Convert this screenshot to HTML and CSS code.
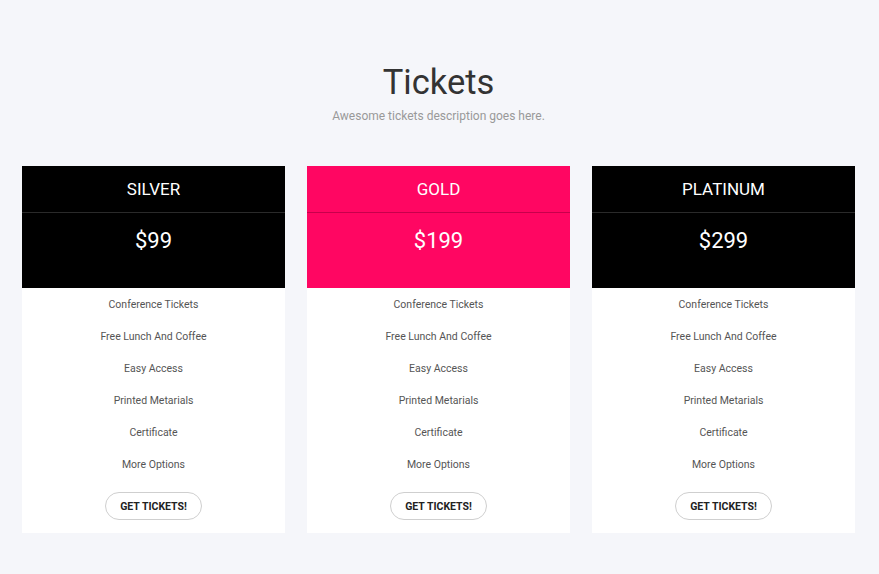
FILE: index.html
```html
<!DOCTYPE html>
<html lang="en">
<head>
<meta charset="utf-8">
<title>Tickets</title>
<link rel="stylesheet" href="styles.css">
</head>
<body>
<section class="tickets">
  <h1 class="title">Tickets</h1>
  <p class="subtitle">Awesome tickets description goes here.</p>
  <div class="cards">
    <div class="card">
      <div class="card-head">SILVER</div>
      <div class="card-price">$99</div>
      <ul class="features">
        <li>Conference Tickets</li>
        <li>Free Lunch And Coffee</li>
        <li>Easy Access</li>
        <li>Printed Metarials</li>
        <li>Certificate</li>
        <li>More Options</li>
      </ul>
      <div class="card-foot"><a class="btn" href="#">GET TICKETS!</a></div>
    </div>
    <div class="card card-gold">
      <div class="card-head">GOLD</div>
      <div class="card-price">$199</div>
      <ul class="features">
        <li>Conference Tickets</li>
        <li>Free Lunch And Coffee</li>
        <li>Easy Access</li>
        <li>Printed Metarials</li>
        <li>Certificate</li>
        <li>More Options</li>
      </ul>
      <div class="card-foot"><a class="btn" href="#">GET TICKETS!</a></div>
    </div>
    <div class="card">
      <div class="card-head">PLATINUM</div>
      <div class="card-price">$299</div>
      <ul class="features">
        <li>Conference Tickets</li>
        <li>Free Lunch And Coffee</li>
        <li>Easy Access</li>
        <li>Printed Metarials</li>
        <li>Certificate</li>
        <li>More Options</li>
      </ul>
      <div class="card-foot"><a class="btn" href="#">GET TICKETS!</a></div>
    </div>
  </div>
</section>
</body>
</html>
```
FILE: styles.css
```css
html, body {
  margin: 0;
  padding: 0;
  background: #f5f6fa;
  font-family: Roboto, "Liberation Sans", Arial, sans-serif;
}
.tickets {
  padding: 62px 24px 40px 22px;
}
.title {
  margin: 0;
  text-align: center;
  font-size: 34.5px;
  line-height: 40px;
  font-weight: 400;
  color: #333;
}
.subtitle {
  margin: 4px 0 0;
  text-align: center;
  font-size: 12px;
  line-height: 20px;
  color: #999;
}
.cards {
  margin-top: 40px;
  display: grid;
  grid-template-columns: repeat(3, 263px);
  column-gap: 22px;
}
.card {
  background: #fff;
  text-align: center;
}
.card-head {
  background: #000;
  color: #fff;
  font-size: 17px;
  line-height: 45px;
  padding-top: 1px;
  border-bottom: 1px solid #2a2a2a;
}
.card-price {
  background: #000;
  color: #fff;
  font-size: 22px;
  line-height: 26px;
  padding: 15px 0 34px;
}
.card-gold .card-head {
  background: #ff0662;
  border-bottom-color: #c8004c;
}
.card-gold .card-price {
  background: #ff0662;
}
.features {
  list-style: none;
  margin: 0;
  padding: 1px 0 0;
}
.features li {
  font-size: 10.5px;
  line-height: 32px;
  color: #555;
}
.card-foot {
  padding: 11px 0 13px;
}
.btn {
  display: inline-block;
  box-sizing: border-box;
  width: 97px;
  height: 28px;
  line-height: 27px;
  border: 1px solid #cfcfcf;
  border-radius: 14px;
  font-size: 10.5px;
  font-weight: 700;
  color: #222;
  text-decoration: none;
}
```
